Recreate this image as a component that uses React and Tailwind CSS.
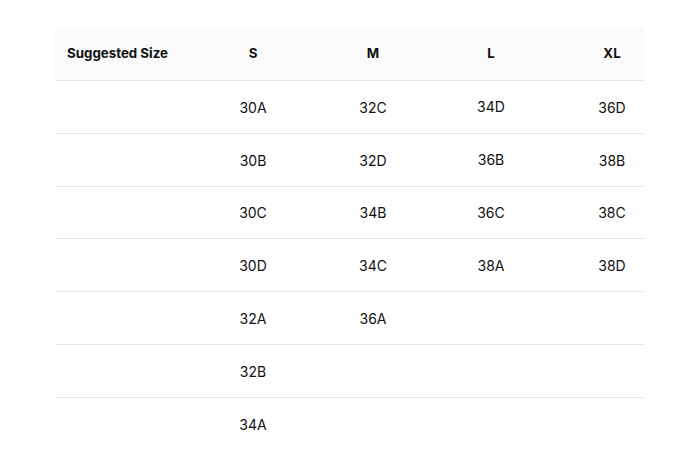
import React from "react";

const rows = [
  ["30A", "32C", "34D", "36D"],
  ["30B", "32D", "36B", "38B"],
  ["30C", "34B", "36C", "38C"],
  ["30D", "34C", "38A", "38D"],
  ["32A", "36A", "", ""],
  ["32B", "", "", ""],
  ["34A", "", "", ""],
];

const grid = "grid grid-cols-[138px_120px_120px_116px_95px] items-center";

export default function App() {
  return (
    <div className="w-[700px] h-[458px] overflow-hidden bg-white pt-[27px] pl-[55px] text-[14px] text-[#111]" style={{ fontFamily: "Inter, 'Noto Sans', sans-serif" }}>
      <div className="w-[589px]">
        <div className={`${grid} h-[54px] bg-[#fafafa] border-b border-[#e6e6e6] font-bold text-[13.3px]`}>
          <div className="pl-[12px]">Suggested Size</div>
          <div className="text-center">S</div>
          <div className="text-center">M</div>
          <div className="text-center">L</div>
          <div className="text-center pl-[31px]">XL</div>
        </div>
        {rows.map((r, i) => (
          <div key={i} className={`${grid} h-[52.8px] ${i < rows.length - 1 ? "border-b border-[#e6e6e6]" : ""}`}>
            <div></div>
            <div className="text-center pt-px">{r[0]}</div>
            <div className="text-center pt-px">{r[1]}</div>
            <div className="text-center">{r[2]}</div>
            <div className="text-center pl-[31px] pt-px">{r[3]}</div>
          </div>
        ))}
      </div>
    </div>
  );
}
